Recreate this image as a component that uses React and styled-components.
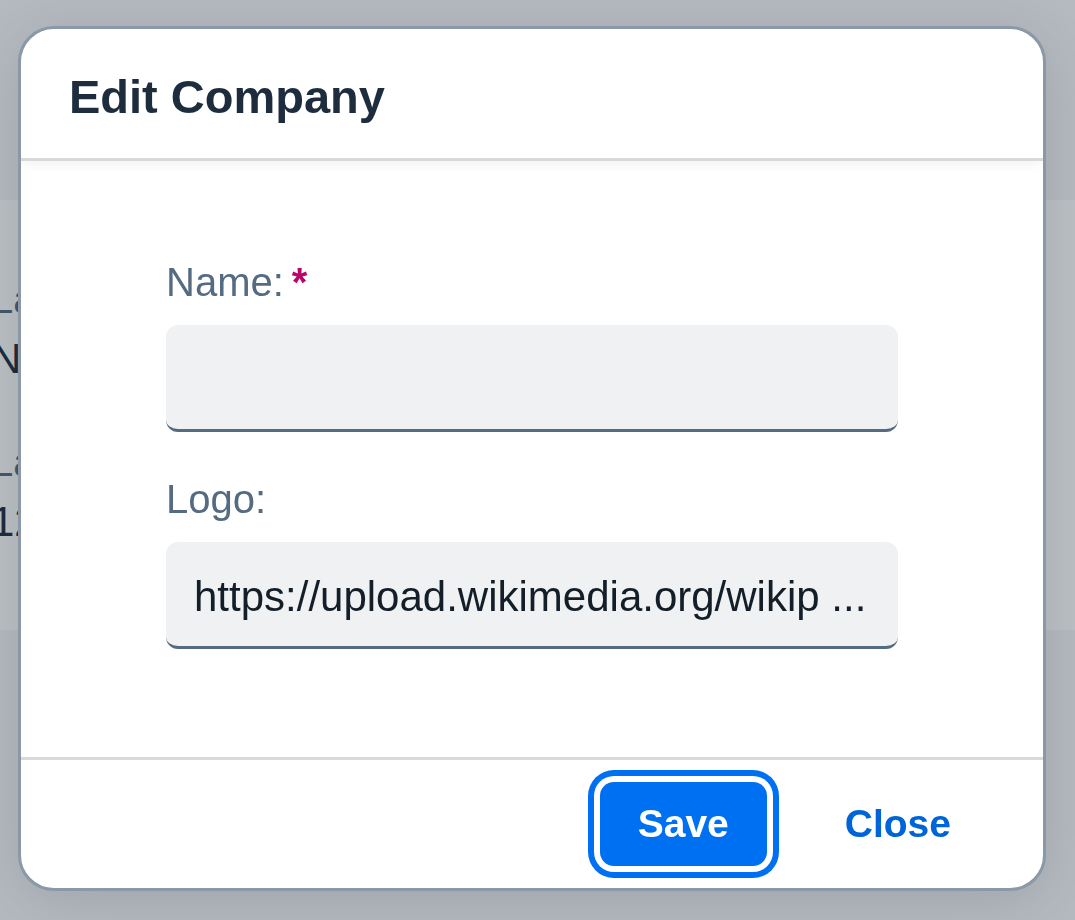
import React from 'react';
import styled, { createGlobalStyle } from 'styled-components';

const GlobalStyle = createGlobalStyle`
  html, body {
    margin: 0;
    padding: 0;
  }

  body {
    background: #f5f6f7;
    font-family: "Liberation Sans", Arial, sans-serif;
    overflow: hidden;
  }

  #root {
    min-height: 100vh;
  }
`;

// page sitting behind the dialog
const Page = styled.main`
  min-height: 100vh;
  padding-top: 200px;
  box-sizing: border-box;
`;

const BackCard = styled.section`
  height: 430px;
  background: #ffffff;
  box-sizing: border-box;
  padding-top: 75px;
  margin-left: -9px;
  display: flex;
  flex-direction: column;
  gap: 54px;
`;

const BackField = styled.div`
  display: flex;
  flex-direction: column;
  gap: 11px;
`;

const BackLabel = styled.span`
  font-size: 40px;
  line-height: 48px;
  color: #556b82;
  white-space: nowrap;
`;

const BackValue = styled.span`
  font-size: 42px;
  line-height: 50px;
  color: #1d2d3e;
  white-space: nowrap;
`;

const Overlay = styled.div`
  position: fixed;
  inset: 0;
  background: rgba(29, 45, 62, 0.3);
  padding: 26px 0 0 18px;
`;

const Dialog = styled.div`
  width: 1028px;
  height: 865px;
  box-sizing: border-box;
  background: #ffffff;
  border: 3px solid #8b98a7;
  border-radius: 36px;
  box-shadow: 0 10px 60px rgba(0, 0, 0, 0.12);
  display: flex;
  flex-direction: column;
  overflow: hidden;
`;

const Header = styled.header`
  height: 132px;
  box-sizing: border-box;
  padding: 6px 0 0 48px;
  display: flex;
  align-items: center;
  border-bottom: 3px solid #d9d9d9;
  box-shadow: 0 6px 10px -2px rgba(0, 0, 0, 0.05);
  position: relative;
  z-index: 1;
`;

const Title = styled.h2`
  margin: 0;
  font-size: 47px;
  font-weight: 700;
  color: #1d2d3e;
`;

const Content = styled.div`
  flex: 1;
  padding: 97px 145px 0;
  display: flex;
  flex-direction: column;
  gap: 43px;
`;

const Field = styled.div`
  display: flex;
  flex-direction: column;
  gap: 19px;
`;

const Label = styled.label`
  font-size: 40px;
  line-height: 48px;
  color: #556b82;
`;

const Required = styled.span`
  color: #ba066c;
  font-weight: 700;
  margin-left: 8px;
`;

const Input = styled.input`
  width: 100%;
  height: 107px;
  box-sizing: border-box;
  border: none;
  border-bottom: 3px solid #556b81;
  border-radius: 12px;
  background: #eff1f2;
  padding: 5px 27px 0 28px;
  font-family: "Liberation Sans", Arial, sans-serif;
  font-size: 42px;
  color: #131e29;
  outline: none;
  text-overflow: ellipsis;
`;

const Footer = styled.footer`
  height: 131px;
  box-sizing: border-box;
  border-top: 3px solid #d9d9d9;
  display: flex;
  align-items: center;
  justify-content: flex-end;
  gap: 40px;
  padding-right: 54px;
`;

const Button = styled.button`
  height: 84px;
  padding: 0 38px;
  border: none;
  border-radius: 14px;
  font-family: "Liberation Sans", Arial, sans-serif;
  font-size: 39px;
  font-weight: 700;
  cursor: pointer;
  background: ${({ primary }) => (primary ? '#0070f2' : 'transparent')};
  color: ${({ primary }) => (primary ? '#ffffff' : '#0064d9')};
  box-shadow: ${({ focused }) =>
    focused ? '0 0 0 6px #ffffff, 0 0 0 12px #0070f2' : 'none'};
`;

const App = () => {
  return (
    <>
      <GlobalStyle />
      <Page>
        <BackCard>
          <BackField>
            <BackLabel>Last Name:</BackLabel>
            <BackValue>Novak</BackValue>
          </BackField>
          <BackField>
            <BackLabel>Last Updated:</BackLabel>
            <BackValue>12/04/2024</BackValue>
          </BackField>
        </BackCard>
      </Page>
      <Overlay>
        <Dialog role="dialog" aria-label="Edit Company">
          <Header>
            <Title>Edit Company</Title>
          </Header>
          <Content>
            <Field>
              <Label htmlFor="company-name">
                Name:<Required>*</Required>
              </Label>
              <Input id="company-name" defaultValue="" />
            </Field>
            <Field>
              <Label htmlFor="company-logo">Logo:</Label>
              <Input
                id="company-logo"
                defaultValue="https://upload.wikimedia.org/wikip ..."
              />
            </Field>
          </Content>
          <Footer>
            <Button primary focused>
              Save
            </Button>
            <Button>Close</Button>
          </Footer>
        </Dialog>
      </Overlay>
    </>
  );
};

export default App;
